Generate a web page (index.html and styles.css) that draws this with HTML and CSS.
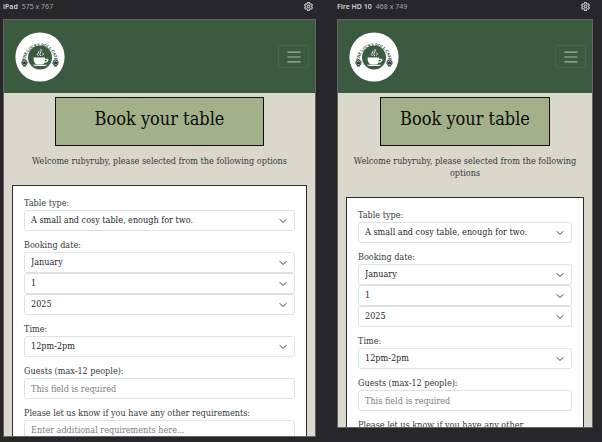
FILE: index.html
```html
<!DOCTYPE html>
<html lang="en">
<head>
<meta charset="utf-8">
<meta name="viewport" content="width=device-width, initial-scale=1">
<title>Book your table</title>
<link rel="stylesheet" href="styles.css">
</head>
<body>
<svg class="defs" aria-hidden="true">
  <defs>
    <path id="logo-arc" d="M10.200 29a14.800 14.800 0 1 1 29.600 0"/>
    <symbol id="gear" viewBox="0 0 16 16">
      <path d="M6.500 1h3l.5 2 1.500.9 2-.6 1.500 2.600L13.500 7.300v1.400l1.500 1.400-1.500 2.600-2-.6-1.500.9-.5 2h-3l-.5-2-1.500-.9-2 .6L1 10.100l1.500-1.400V7.300L1 5.900l1.500-2.600 2 .6L6 3z"/>
      <circle cx="8" cy="8" r="2.500"/>
    </symbol>
    <symbol id="bars" viewBox="0 0 30 30">
      <path d="M4 7h22M4 15h22M4 23h22"/>
    </symbol>
    <symbol id="logo" viewBox="0 0 50 50">
      <circle cx="25" cy="25" r="24.600" fill="#fff"/>
      <circle cx="25" cy="25.500" r="12" fill="#3b5b40"/>
      <path d="M18.500 25.500h11.500v1.200h2.200q1.800 0 1.200 1.800-.8 2.300-3.900 2.300-1 1.400-2.500 1.700h-5q-3.500-1-3.500-7zm11.400 2.200q0 1-.4 2 2.300-.1 2.700-2z" fill="#fff"/>
      <path d="M17.500 32.700h15q-1.500 1.300-4 1.300h-7q-2.500 0-4-1.300z" fill="#fff"/>
      <path d="M23.500 24q-2.200-1.500-.3-3 1.200-1 .6-2.200M25.800 24q-2-1.800-.2-3.800 1.300-1.600.1-3.200M27.500 23.500q1.500-1 .3-2.800" fill="none" stroke="#fff" stroke-width=".9"/>
      <g fill="#fff" stroke="#30443a">
        <circle cx="9.500" cy="30.800" r="2.700"/>
        <circle cx="40.500" cy="30.800" r="2.700"/>
      </g>
      <path d="M7 30.500l2.500-1.500 2.500 1.500-1.200 2H8.200zm31 0l2.500-1.500 2.500 1.500-1.200 2h-2.600zM8 33.300h3v1.200H8zm31 0h3v1.200h-3z" fill="#30443a"/>
    </symbol>
  </defs>
</svg>

<main class="devices">
  <section class="device device-wide">
    <header class="device-bar">
      <strong>iPad</strong><span>575 x 767</span>
      <button class="settings" type="button" aria-label="Device settings"><svg><use href="#gear"/></svg></button>
    </header>
    <div class="screen screen-wide">
      <nav class="navbar">
        <a href="#" class="brand" aria-label="The Lucky Roll Cafe">
          <svg viewBox="0 0 50 50"><use href="#logo"/><text class="logo-text"><textPath href="#logo-arc" startOffset="50%">THE LUCKY ROLL CAFE</textPath></text></svg>
        </a>
        <button class="toggler" type="button" aria-label="Toggle navigation"><svg><use href="#bars"/></svg></button>
      </nav>
      <h1 class="title">Book your table</h1>
      <p class="welcome">Welcome rubyruby, please selected from the following options</p>
      <form class="booking">
        <div class="field">
          <label for="a-type">Table type:</label>
          <select id="a-type"><option>A small and cosy table, enough for two.</option></select>
        </div>
        <div class="field">
          <label for="a-month">Booking date:</label>
          <select id="a-month"><option>January</option></select>
          <select aria-label="Day"><option>1</option></select>
          <select aria-label="Year"><option>2025</option></select>
        </div>
        <div class="field">
          <label for="a-time">Time:</label>
          <select id="a-time"><option>12pm-2pm</option></select>
        </div>
        <div class="field">
          <label for="a-guests">Guests (max-12 people):</label>
          <input id="a-guests" type="text" placeholder="This field is required">
        </div>
        <div class="field">
          <label for="a-notes">Please let us know if you have any other requirements:</label>
          <textarea id="a-notes" placeholder="Enter additional requirements here..."></textarea>
        </div>
      </form>
    </div>
  </section>

  <section class="device device-narrow">
    <header class="device-bar">
      <strong>Fire HD 10</strong><span>468 x 749</span>
      <button class="settings" type="button" aria-label="Device settings"><svg><use href="#gear"/></svg></button>
    </header>
    <div class="screen screen-narrow">
      <nav class="navbar">
        <a href="#" class="brand" aria-label="The Lucky Roll Cafe">
          <svg viewBox="0 0 50 50"><use href="#logo"/><text class="logo-text"><textPath href="#logo-arc" startOffset="50%">THE LUCKY ROLL CAFE</textPath></text></svg>
        </a>
        <button class="toggler" type="button" aria-label="Toggle navigation"><svg><use href="#bars"/></svg></button>
      </nav>
      <h1 class="title">Book your table</h1>
      <p class="welcome">Welcome rubyruby, please selected from the following options</p>
      <form class="booking">
        <div class="field">
          <label for="b-type">Table type:</label>
          <select id="b-type"><option>A small and cosy table, enough for two.</option></select>
        </div>
        <div class="field">
          <label for="b-month">Booking date:</label>
          <select id="b-month"><option>January</option></select>
          <select aria-label="Day"><option>1</option></select>
          <select aria-label="Year"><option>2025</option></select>
        </div>
        <div class="field">
          <label for="b-time">Time:</label>
          <select id="b-time"><option>12pm-2pm</option></select>
        </div>
        <div class="field">
          <label for="b-guests">Guests (max-12 people):</label>
          <input id="b-guests" type="text" placeholder="This field is required">
        </div>
        <div class="field">
          <label for="b-notes">Please let us know if you have any other requirements:</label>
          <textarea id="b-notes" placeholder="Enter additional requirements here..."></textarea>
        </div>
      </form>
    </div>
  </section>
</main>
</body>
</html>
```
FILE: styles.css
```css
* { box-sizing: border-box; }

body {
  margin: 0;
  min-height: 100vh;
  background: #272729;
  color: #34383c;
  font: 9px/13px "DejaVu Serif Condensed", "DejaVu Serif", serif;
}

.defs { position: absolute; width: 0; height: 0; }

.devices {
  display: flex;
  align-items: flex-start;
  gap: 21px;
  padding: 0 9px 0 3px;
}

.device { min-width: 0; }
.device-wide { flex: 313 1 0; }
.device-narrow { flex: 256 1 0; }

.device-bar {
  display: flex;
  align-items: center;
  gap: 4px;
  height: 19px;
  padding: 0 3px 6px 0;
  color: #a5a5a7;
  font: 7px/13px "Noto Sans", sans-serif;
}
.device-bar strong { color: #d2d2d4; font-weight: 600; }

.settings {
  width: 9px;
  height: 9px;
  margin-left: auto;
  padding: 0;
  border: 0;
  background: none;
}
.settings svg {
  display: block;
  width: 100%;
  height: 100%;
  fill: none;
  stroke: #bdbdbf;
  stroke-width: 2;
}

.screen {
  overflow: hidden;
  border: 1px solid #626464;
  background: #dad8cc;
}
.screen-wide { aspect-ratio: 575 / 767; min-height: 0; }
.screen-narrow { aspect-ratio: 468 / 747; min-height: 0; }

.navbar {
  display: flex;
  align-items: center;
  justify-content: space-between;
  height: 73px;
  padding: 0 6px 0 11px;
  background: #3b5b40;
}

.brand, .brand svg { display: block; width: 50px; height: 50px; }

.logo-text {
  fill: #30443a;
  stroke: #30443a;
  stroke-width: .15;
  font: 4px "Liberation Serif", serif;
  text-anchor: middle;
}

.toggler {
  display: grid;
  place-items: center;
  width: 31px;
  height: 23px;
  padding: 0;
  border: 1px solid #47664b;
  border-radius: 3px;
  background: none;
}
.toggler svg {
  width: 18px;
  height: 18px;
  stroke: #a3b4a5;
  stroke-width: 2;
}

.title {
  width: 67%;
  margin: 4px auto 9px;
  padding: 8px 0 13px;
  border: 1px solid #0d100b;
  background: #a3b18a;
  color: #0a0c09;
  font-size: 18px;
  line-height: 26px;
  font-weight: 400;
  text-align: center;
}

.welcome { margin: 0 8px 18px; line-height: 12px; text-align: center; }

.booking {
  display: flex;
  flex-direction: column;
  gap: 8px;
  margin: 0 8px;
  padding: 11px;
  border: 1px solid #2b2d31;
  background: #fff;
}

.field { display: flex; flex-direction: column; }

.field select, .field input, .field textarea {
  width: 100%;
  height: 21px;
  margin: 0;
  padding: 0 6px;
  border: 1px solid #dee2e6;
  border-radius: 3px;
  background: #fff;
  color: #24282c;
  font: inherit;
}
.field select {
  appearance: none;
  background: #fff url("data:image/svg+xml,%3Csvg xmlns='http://www.w3.org/2000/svg' viewBox='0 0 16 16'%3E%3Cpath fill='none' stroke='%23343a40' stroke-linecap='round' stroke-linejoin='round' stroke-width='2' d='m2 5 6 6 6-6'/%3E%3C/svg%3E") no-repeat right 7px center / 8px 8px;
}
.field textarea { height: 43px; padding-top: 3px; resize: none; }
.field ::placeholder { color: #7b8085; opacity: 1; }
```
